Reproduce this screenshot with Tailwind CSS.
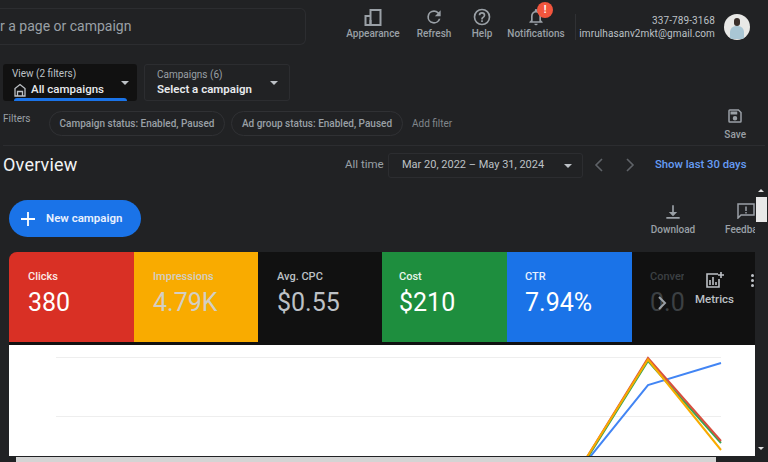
<!DOCTYPE html>
<html lang="en">
<head>
    <meta charset="UTF-8">
    <title>Overview</title>
    <script src="https://cdn.jsdelivr.net/npm/@tailwindcss/browser@4"></script>
</head>
<body class="bg-[#212224] font-['Roboto',sans-serif] w-[768px] h-[462px] overflow-hidden relative">
    <!-- top bar -->
    <header class="h-[64px] flex items-start">
        <div class="w-[306px] h-[37px] mt-[8px] border border-l-0 border-[#2c2d30] rounded-r-md flex items-center text-[14px] text-[#9aa0a6]">r a page or campaign</div>
        <div class="w-[66px] ml-[34px] mt-[8px] flex flex-col items-center text-[10px] text-[#9aa0a6]">
            <svg class="w-[18px] h-[18px]" viewBox="0 0 18 18" fill="none" stroke="#9aa0a6" stroke-width="2"><path d="M6.5 2H16.5V17H6.5zM1.5 8H6.5V17H1.5z"/><path d="M6.5 12v5"/></svg>
            <span class="mt-[1px] leading-[14px] font-medium">Appearance</span>
        </div>
        <div class="w-[56px] mt-[8px] flex flex-col items-center text-[10px] text-[#9aa0a6]">
            <svg class="w-[20px] h-[20px] -m-px" viewBox="0 0 24 24" fill="#9aa0a6"><path d="M17.65 6.35A7.96 7.96 0 0 0 12 4a8 8 0 1 0 7.73 10h-2.08A6 6 0 1 1 12 6c1.66 0 3.14.69 4.22 1.78L13 11h7V4z"/></svg>
            <span class="mt-[1px] leading-[14px] font-medium">Refresh</span>
        </div>
        <div class="w-[40px] mt-[8px] flex flex-col items-center text-[10px] text-[#9aa0a6]">
            <svg class="w-[20px] h-[20px] -m-px" viewBox="0 0 24 24" fill="#9aa0a6"><path d="M11 18h2v-2h-2zm1-16a10 10 0 1 0 0 20 10 10 0 0 0 0-20zm0 18a8 8 0 1 1 0-16 8 8 0 0 1 0 16zm0-14a4 4 0 0 0-4 4h2a2 2 0 1 1 4 0c0 2-3 1.75-3 5h2c0-2.25 3-2.5 3-5a4 4 0 0 0-4-4z"/></svg>
            <span class="mt-[1px] leading-[14px] font-medium">Help</span>
        </div>
        <div class="w-[62px] mt-[8px] ml-[3px] flex flex-col items-center text-[10px] text-[#9aa0a6] relative">
            <svg class="w-[20px] h-[20px] -m-px" viewBox="0 0 24 24" fill="#9aa0a6"><path d="M12 22a2 2 0 0 0 2-2h-4a2 2 0 0 0 2 2zm6-6v-5c0-3.1-1.6-5.6-4.5-6.3V4a1.5 1.5 0 0 0-3 0v.7C7.6 5.4 6 7.9 6 11v5l-2 2v1h16v-1zm-2 1H8v-6c0-2.5 1.5-4.5 4-4.5s4 2 4 4.5z"/></svg>
            <span class="mt-[1px] leading-[14px] font-medium whitespace-nowrap">Notifications</span>
            <span class="absolute left-[32px] top-[-6px] w-[16px] h-[16px] rounded-full bg-[#f2553d] text-white text-[10px] font-bold leading-[16px] text-center">!</span>
        </div>
        <div class="w-px h-[26px] bg-[#303134] mt-[14px] ml-[8px]"></div>
        <div class="w-[139px] mt-[14px] text-right text-[10px] leading-[13px] text-[#bdc1c6] tracking-[0.1px]">
            <div>337-789-3168</div>
            <div class="whitespace-nowrap">imrulhasanv2mkt@gmail.com</div>
        </div>
        <div class="w-[26px] h-[26px] ml-[9px] mt-[14px] rounded-full bg-[#e8e8e6] overflow-hidden flex flex-col items-center">
            <div class="w-[6px] h-[8px] mt-[4px] rounded-full bg-[#3a2f2a]"></div>
            <div class="w-[14px] h-[13px] rounded-t-md bg-[#a9c6d4]"></div>
        </div>
    </header>

    <!-- view / campaign pickers -->
    <section class="h-[37px] flex pl-[3px] gap-[7px]">
        <div class="w-[134px] h-[37px] bg-[#111111] rounded-[3px] relative pl-[9px] pt-[3px]">
            <div class="text-[10px] leading-[14px] text-[#bdc1c6]">View (2 filters)</div>
            <div class="flex items-center gap-[4px] ml-[1px] mt-[1px] text-[11.5px] leading-[15px] text-[#e8eaed] font-medium">
                <svg class="w-[14px] h-[14px]" viewBox="0 0 14 14" fill="none" stroke="#bdc1c6" stroke-width="1.3"><path d="M2 13V5.5L7 1.5l5 4V13zM4.5 13V8.5h5V13"/></svg>
                All campaigns
            </div>
            <div class="absolute left-[11px] bottom-0 w-[113px] h-[3px] bg-[#1a73e8] rounded-t-sm"></div>
            <div class="absolute right-[8px] top-[17px] w-0 h-0 border-x-[4px] border-x-transparent border-t-[4px] border-t-[#bdc1c6]"></div>
        </div>
        <div class="w-[146px] h-[37px] border border-[#2c2d30] rounded-[3px] relative pl-[12px] pt-[3px]">
            <div class="text-[10px] leading-[14px] text-[#9aa0a6]">Campaigns (6)</div>
            <div class="text-[11.5px] leading-[15px] text-[#e8eaed] font-semibold">Select a campaign</div>
            <div class="absolute right-[11px] top-[16px] w-0 h-0 border-x-[4px] border-x-transparent border-t-[4px] border-t-[#bdc1c6]"></div>
        </div>
    </section>

    <!-- filter row -->
    <section class="h-[44px] mt-[1px] mx-[3px] flex items-start border-b border-[#2c2d30] relative">
        <div class="text-[10px] leading-[14px] text-[#9aa0a6] mt-[10px] w-[46px]">Filters</div>
        <div class="h-[25px] mt-[9px] w-[176px] border border-[#303134] rounded-full flex items-center justify-center text-[10px] text-[#9aa0a6] font-medium whitespace-nowrap">Campaign status: Enabled, Paused</div>
        <div class="h-[25px] mt-[9px] ml-[6px] w-[172px] border border-[#303134] rounded-full flex items-center justify-center text-[10px] text-[#9aa0a6] font-medium whitespace-nowrap">Ad group status: Enabled, Paused</div>
        <div class="mt-[15px] ml-[9px] text-[10px] leading-[14px] text-[#80868b]">Add filter</div>
        <div class="ml-auto mr-[19px] mt-[5px] flex flex-col items-center text-[10px] text-[#9aa0a6] font-medium">
            <svg class="w-[18px] h-[18px]" viewBox="0 0 24 24" fill="#9aa0a6"><path d="M17 3H5a2 2 0 0 0-2 2v14a2 2 0 0 0 2 2h14a2 2 0 0 0 2-2V7zm2 16H5V5h11.2L19 7.8zM12 12a3 3 0 1 0 0 6 3 3 0 0 0 0-6zM6 6h9v4H6z"/></svg>
            <span class="mt-[3px] leading-[13px]">Save</span>
        </div>
    </section>

    <!-- overview row -->
    <section class="h-[32px] mt-[3px] pl-[3px] flex items-center">
        <h1 class="text-[18px] font-normal text-[#f1f3f4] w-[342px] tracking-[0.2px] mb-[2px]">Overview</h1>
        <span class="text-[11.5px] text-[#9aa0a6] w-[43px]">All time</span>
        <div class="w-[195px] h-[25px] border border-[#2c2d30] rounded-[3px] flex items-center pl-[13px] text-[11px] text-[#bdc1c6] relative">
            Mar 20, 2022 – May 31, 2024
            <div class="absolute right-[10px] top-[10px] w-0 h-0 border-x-[4px] border-x-transparent border-t-[4px] border-t-[#bdc1c6]"></div>
        </div>
        <svg class="w-[10px] h-[14px] ml-[11px]" viewBox="0 0 10 14" fill="none" stroke="#5f6368" stroke-width="1.6"><path d="M8 1 2 7l6 6"/></svg>
        <svg class="w-[10px] h-[14px] ml-[21px]" viewBox="0 0 10 14" fill="none" stroke="#5f6368" stroke-width="1.6"><path d="m2 1 6 6-6 6"/></svg>
        <a class="ml-[20px] text-[11.3px] text-[#669df6] font-medium whitespace-nowrap">Show last 30 days</a>
    </section>

    <!-- action row -->
    <section class="h-[52px] mt-[19px] pl-[9px] flex items-start relative">
        <button class="w-[132px] h-[37px] bg-[#1a73e8] rounded-full flex items-center pl-[12px] gap-[11px] text-[11.5px] font-semibold text-[#e8f0fe]">
            <svg class="w-[14px] h-[14px]" viewBox="0 0 14 14" stroke="#ffffff" stroke-width="1.8"><path d="M7 0v14M0 7h14"/></svg>
            New campaign
        </button>
        <div class="ml-[497px] mt-[3px] w-[70px] flex flex-col items-center text-[10px] text-[#9aa0a6] font-medium">
            <svg class="w-[20px] h-[20px] -m-px" viewBox="0 0 24 24" fill="#9aa0a6"><path d="M13 4h-2v8H7l5 5 5-5h-4zM4 18v2h16v-2z"/></svg>
            <span class="mt-[2px] leading-[14px]">Download</span>
        </div>
        <div class="ml-[14px] mt-[3px] w-[33px] h-[36px] overflow-hidden flex flex-col items-start pl-[3px] text-[10px] text-[#9aa0a6] font-medium">
            <svg class="w-[18px] h-[16px] ml-[12px] shrink-0" viewBox="0 0 18 16" fill="none" stroke="#9aa0a6" stroke-width="1.5"><path d="M1 1h16v11H4l-3 3z"/><path d="M9 3.5v4.5M9 9v1.5"/></svg>
            <span class="mt-[4px] leading-[14px] whitespace-nowrap">Feedback</span>
        </div>
    </section>

    <!-- metric cards -->
    <section class="ml-[9px] w-[746px] h-[90px] flex rounded-tl-lg overflow-hidden relative">
        <div class="w-[125px] bg-[#d93025] pl-[19px] pt-[18px] text-[#fce8e6]">
            <div class="text-[11px] leading-[14px] font-medium">Clicks</div>
            <div class="text-[25px] leading-[32px] mt-[3px] text-white">380</div>
        </div>
        <div class="w-[124px] bg-[#f9ab00] pl-[19px] pt-[18px] text-[#d2cfc4]">
            <div class="text-[11px] leading-[14px] font-medium">Impressions</div>
            <div class="text-[25px] leading-[32px] mt-[3px]">4.79K</div>
        </div>
        <div class="w-[124px] bg-[#111111] pl-[19px] pt-[18px] text-[#bdc1c6]">
            <div class="text-[11px] leading-[14px] font-medium">Avg. CPC</div>
            <div class="text-[25px] leading-[32px] mt-[3px]">$0.55</div>
        </div>
        <div class="w-[125px] bg-[#1e8e3e] pl-[17px] pt-[18px] text-[#e6f4ea]">
            <div class="text-[11px] leading-[14px] font-medium">Cost</div>
            <div class="text-[25px] leading-[32px] mt-[3px] text-white">$210</div>
        </div>
        <div class="w-[125px] bg-[#1a73e8] pl-[18px] pt-[18px] text-[#e8f0fe]">
            <div class="text-[11px] leading-[14px] font-medium">CTR</div>
            <div class="text-[25px] leading-[32px] mt-[3px] text-white">7.94%</div>
        </div>
        <div class="flex-1 bg-[#111111] pl-[18px] pt-[18px] text-[#3c4043] overflow-hidden whitespace-nowrap">
            <div class="text-[11px] leading-[14px] font-medium">Conversions</div>
            <div class="text-[25px] leading-[32px] mt-[3px]">0.00</div>
        </div>
        <!-- metrics overlay -->
        <div class="absolute right-0 top-0 w-[71px] h-[90px] bg-[#111111] flex flex-col items-center text-[11.5px] text-[#bdc1c6] font-medium pt-[20px] pr-[10px]">
            <svg class="w-[18px] h-[16px]" viewBox="0 0 18 16" fill="none" stroke="#bdc1c6" stroke-width="1.6"><path d="M12 2H1v13h12V7"/><path d="M4 13V8M7 13V5M10 13v-3"/><path d="M15 0v6M12 3h6"/></svg>
            <span class="mt-[4px] leading-[14px]">Metrics</span>
        </div>
        <div class="absolute right-[1px] top-[22px] flex flex-col gap-[2px]">
            <span class="w-[3px] h-[3px] rounded-full bg-[#bdc1c6]"></span>
            <span class="w-[3px] h-[3px] rounded-full bg-[#bdc1c6]"></span>
            <span class="w-[3px] h-[3px] rounded-full bg-[#bdc1c6]"></span>
        </div>
        <svg class="absolute left-[647px] top-[44px] w-[12px] h-[14px]" viewBox="0 0 12 14" fill="none" stroke="#9aa0a6" stroke-width="2"><path d="m3 1 6 6-6 6"/></svg>
    </section>

    <!-- chart -->
    <section class="ml-[9px] w-[746px] h-[114px] border-t-[3px] border-[#111111] bg-white relative">
        <svg class="absolute left-0 top-0 w-[746px] h-[111px]" viewBox="9 345 746 111">
            <path d="M56 357.5h665M56 416.5h665" stroke="#eeeeee" stroke-width="1" fill="none"/>
            <g fill="none" stroke-width="2">
                <path d="M590 457 648 385 721 363" stroke="#4285f4"/>
                <path d="M588 457 648 361 721 443" stroke="#34a853"/>
                <path d="M587 457 648 358 721 441" stroke="#d8503f"/>
                <path d="M587 457 648 359.5 721 450" stroke="#f9ab00"/>
            </g>
        </svg>
    </section>

    <!-- scrollbars -->
    <div class="absolute left-[755px] top-[186px] w-[13px] h-[276px] bg-[#212224]">
        <div class="absolute left-[3px] top-[3px] w-0 h-0 border-x-[3px] border-x-transparent border-b-[3px] border-b-[#e0e0e0]"></div>
        <div class="absolute left-[1px] top-[11px] w-[11px] h-[25px] bg-[#e8e8e8]"></div>
        <div class="absolute left-[3px] top-[261px] w-0 h-0 border-x-[3px] border-x-transparent border-t-[3px] border-t-[#e0e0e0]"></div>
    </div>
    <div class="absolute left-0 top-[456px] w-[755px] h-[6px] bg-[#212224]">
        <div class="absolute left-[16px] top-[1px] w-[700px] h-[5px] bg-[#d4d4d4]"></div>
    </div>
</body>
</html>
